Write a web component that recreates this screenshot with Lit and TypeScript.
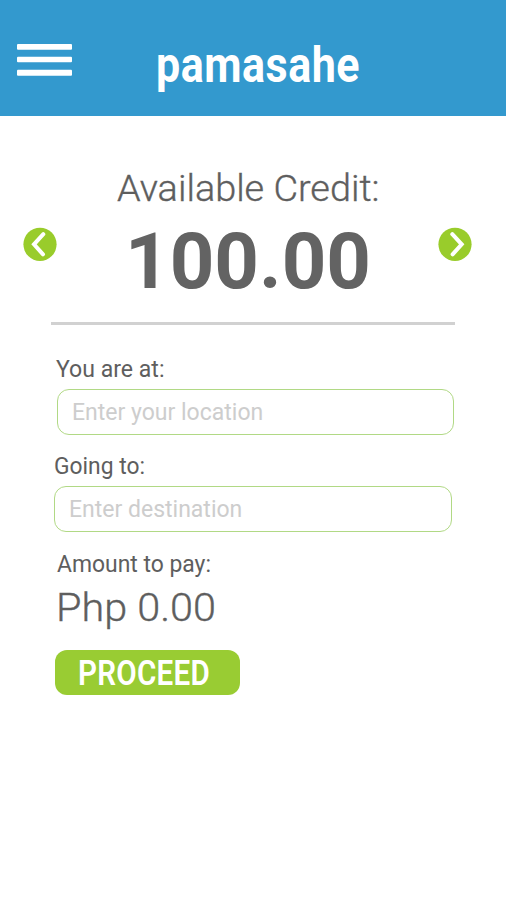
import { LitElement, html, css } from "lit";
import { customElement, property } from "lit/decorators.js";

/** One line of text set to an exact width; the baseline is measured from the top of the box. */
@customElement("fit-text")
export class FitText extends LitElement {
  @property() text = "";
  @property({ type: Number }) width = 100;
  @property({ type: Number }) height = 30;
  @property({ type: Number }) baseline = 20;

  static styles = css`
    :host { display: block; }
    svg { display: block; overflow: visible; fill: currentColor; }
  `;

  render() {
    return html`<svg width=${this.width} height=${this.height}>
      <text x="0" y=${this.baseline} textLength=${this.width} lengthAdjust="spacingAndGlyphs">${this.text}</text>
    </svg>`;
  }
}

@customElement("app-root")
export class AppRoot extends LitElement {
  static styles = css`
    :host { display: block; height: 900px; overflow: hidden; background: #fff; color: #5e5e5e; font-family: Roboto, sans-serif; }
    * { box-sizing: border-box; }
    svg { display: block; }
    button { border: 0; padding: 0; background: none; font: inherit; color: inherit; }
    header { height: 116px; background: #3399ce; display: flex; align-items: flex-start; color: #fff; }
    .menu { margin: 44px 83.5px 0 17px; }
    .brand { margin-top: 40px; font-size: 50.5px; font-weight: 700; letter-spacing: .6px; }
    .credit { display: grid; grid-template-columns: 34px 1fr 34px; width: 449px; margin-left: 23px; height: 206px; }
    .arrow { margin-top: 111px; height: 34px; }
    .amounts { padding-top: 50px; }
    .title { padding-left: 60px; font-size: 37.5px; font-weight: 300; stroke: currentColor; stroke-width: .35px; }
    .balance { padding-left: 68px; font-size: 78px; font-weight: 700; color: #636363; }
    .line { height: 3px; width: 404px; margin-left: 51px; background: #d1d1d1; }
    form { display: flex; flex-direction: column; align-items: flex-start; padding: 30px 0 0 54px; }
    .label { font-size: 23px; }
    .at { padding-left: 2px; }
    .field { width: 398px; height: 46px; padding: 1px 0 0 14px; border: 1.5px solid #b1d985; border-radius: 12px; background: #fff; font: 400 23px Roboto, sans-serif; outline: 0; }
    .field::placeholder { color: #cdcdcd; opacity: 1; }
    .from { width: 397px; margin: 0 0 17px 3px; }
    .to { margin-bottom: 18px; }
    .amount-label { padding-left: 3px; }
    .price { padding-left: 1.5px; font-size: 39px; font-weight: 300; stroke: currentColor; stroke-width: .35px; }
    .proceed { width: 185px; height: 45px; margin: 15px 0 0 1px; padding-left: 22.5px; border-radius: 12px; background: #99cc33; color: #fff; font-size: 35px; font-weight: 600; letter-spacing: .3px; }
  `;

  private arrow(label: string, path: string) {
    return html`<button class="arrow" aria-label=${label}>
      <svg width="34" height="34" viewBox="0 0 34 34">
        <circle cx="17" cy="17.3" r="16.6" fill="#99cc2b" />
        <path d=${path} fill="none" stroke="#fff" stroke-width="4" stroke-linecap="round" stroke-linejoin="miter" />
      </svg>
    </button>`;
  }

  render() {
    return html`
      <header>
        <button class="menu" aria-label="Menu">
          <svg width="55" height="32" viewBox="0 0 55 32" fill="#fff">
            <rect width="55" height="5.8" rx="1" /><rect y="12.7" width="55" height="5.5" rx="1" /><rect y="25.7" width="55" height="6" rx="1" />
          </svg>
        </button>
        <fit-text class="brand" text="pamasahe" width="204" height="60" baseline="42"></fit-text>
      </header>
      <section class="credit">
        ${this.arrow("Previous", "M20.3 7.2L11 17.3L20 27.3")}
        <div class="amounts">
          <fit-text class="title" text="Available Credit:" width="262.5" height="50" baseline="34.5"></fit-text>
          <fit-text class="balance" text="100.00" width="246" height="90" baseline="71.5"></fit-text>
        </div>
        ${this.arrow("Next", "M14.3 7.2L23.7 17.3L14.6 27.3")}
      </section>
      <div class="line"></div>
      <form>
        <fit-text class="label at" text="You are at:" width="108.5" height="34" baseline="22"></fit-text>
        <input class="field from" placeholder="Enter your location" />
        <fit-text class="label" text="Going to:" width="91" height="34" baseline="21.5"></fit-text>
        <input class="field to" placeholder="Enter destination" />
        <fit-text class="label amount-label" text="Amount to pay:" width="154" height="37" baseline="22"></fit-text>
        <fit-text class="price" text="Php 0.00" width="160" height="48" baseline="34"></fit-text>
        <button class="proceed" type="button">
          <fit-text text="PROCEED" width="132" height="45" baseline="34.5"></fit-text>
        </button>
      </form>`;
  }
}
